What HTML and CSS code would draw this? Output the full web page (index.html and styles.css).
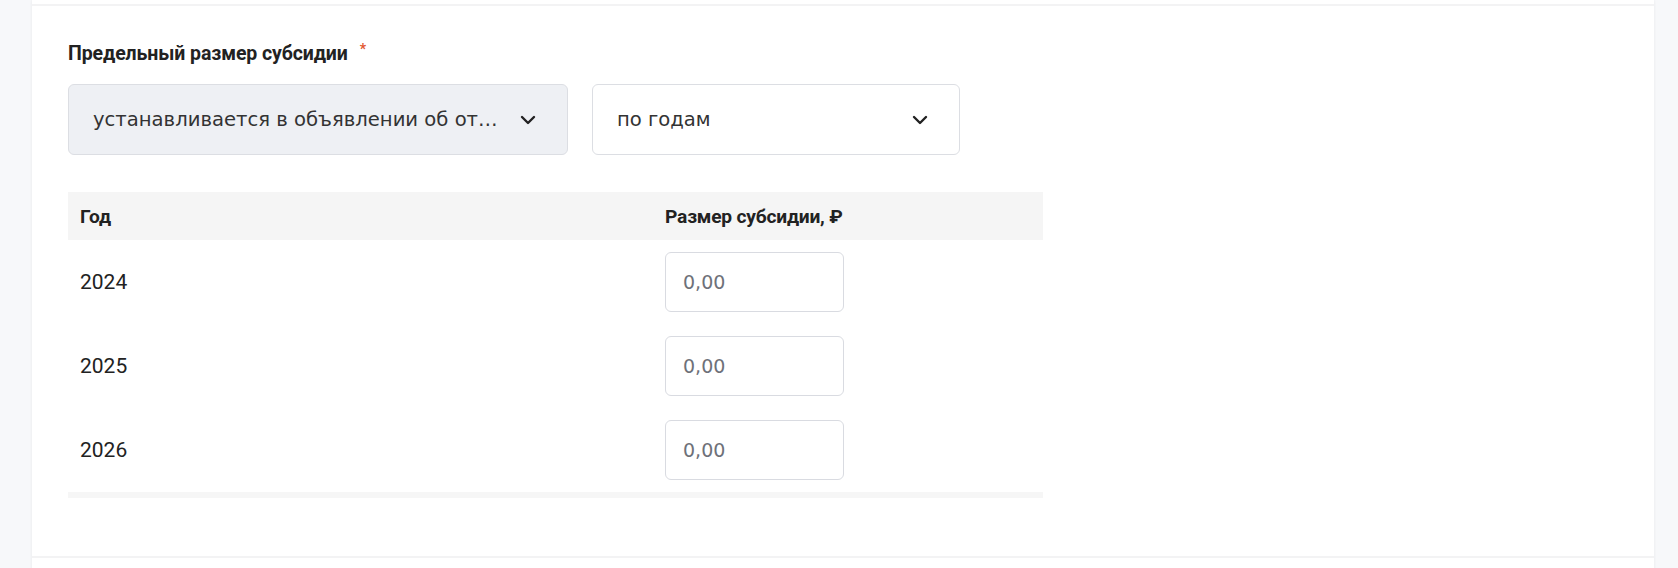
FILE: index.html
```html
<!DOCTYPE html>
<html lang="ru">
<head>
<meta charset="utf-8">
<title>Предельный размер субсидии</title>
<link rel="stylesheet" href="styles.css">
</head>
<body>
<div class="page">
  <div class="card">
    <div class="card-top"></div>
    <div class="card-body">
      <div class="field-label">Предельный размер субсидии<span class="req">*</span></div>
      <div class="selects">
        <div class="select select-disabled">
          <span class="select-text">устанавливается в объявлении об от…</span>
          <svg class="chevron" width="16" height="10" viewBox="0 0 16 10"><path d="M2 2 L8 8 L14 2" fill="none" stroke="#222" stroke-width="2.4" stroke-linecap="round" stroke-linejoin="round"/></svg>
        </div>
        <div class="select select-period">
          <span class="select-text">по годам</span>
          <svg class="chevron" width="16" height="10" viewBox="0 0 16 10"><path d="M2 2 L8 8 L14 2" fill="none" stroke="#222" stroke-width="2.4" stroke-linecap="round" stroke-linejoin="round"/></svg>
        </div>
      </div>
      <div class="table-wrap">
        <table class="years">
          <thead>
            <tr><th class="col-year">Год</th><th>Размер субсидии, ₽</th></tr>
          </thead>
          <tbody>
            <tr><td>2024</td><td><div class="amount">0,00</div></td></tr>
            <tr><td>2025</td><td><div class="amount">0,00</div></td></tr>
            <tr><td>2026</td><td><div class="amount">0,00</div></td></tr>
          </tbody>
        </table>
        <div class="scroll-track"></div>
      </div>
    </div>
    <div class="card-footer"></div>
  </div>
</div>
</body>
</html>
```
FILE: styles.css
```css
html, body {
  margin: 0;
  padding: 0;
  background: #f7f8fa;
  height: 100%;
}

.page {
  padding: 0 24px 0 32px;
  height: 568px;
  overflow: hidden;
}

.card {
  background: #ffffff;
  box-shadow: 0 0 3px rgba(0, 0, 0, 0.07);
  min-height: 568px;
}

.card-top {
  height: 4px;
  border-bottom: 2px solid #f3f3f4;
}

.card-body {
  padding: 31px 36px 58px 36px;
}

.field-label {
  font-family: Roboto, "Liberation Sans", sans-serif;
  font-weight: 700;
  font-size: 19.5px;
  line-height: 24px;
  color: #222222;
  letter-spacing: -0.1px;
}

.req {
  color: #e2572f;
  font-size: 14px;
  font-weight: 700;
  vertical-align: 6px;
  margin-left: 12px;
}

.selects {
  display: flex;
  gap: 24px;
  margin-top: 18px;
}

.select {
  box-sizing: border-box;
  height: 71px;
  border: 1px solid #dcdee3;
  border-radius: 6px;
  display: flex;
  align-items: center;
  justify-content: space-between;
  padding: 0 31px 0 24px;
  font-family: "DejaVu Sans", Verdana, sans-serif;
  font-size: 19.6px;
  color: #333333;
}

.select-disabled {
  width: 500px;
  background: #eef0f4;
}

.select-period {
  width: 368px;
  background: #ffffff;
}

.select-text {
  white-space: nowrap;
}

.chevron {
  flex: none;
  display: block;
}

.table-wrap {
  width: 975px;
  margin-top: 37px;
}

.years {
  width: 100%;
  border-collapse: collapse;
  table-layout: fixed;
  font-family: Roboto, "Liberation Sans", sans-serif;
  color: #222222;
}

.years th {
  box-sizing: border-box;
  background: #f5f5f5;
  height: 48px;
  padding: 0 12px;
  text-align: left;
  font-weight: 700;
  font-size: 19.2px;
  letter-spacing: -0.2px;
}

.years th.col-year {
  width: 60%;
}

.years td {
  padding: 12px;
  font-size: 21px;
  vertical-align: middle;
}

.amount {
  box-sizing: border-box;
  width: 179px;
  height: 60px;
  border: 1px solid #d9dbe1;
  border-radius: 6px;
  display: flex;
  align-items: center;
  padding-left: 17px;
  font-family: "DejaVu Sans", Verdana, sans-serif;
  font-size: 19px;
  color: #6e7179;
}

.scroll-track {
  height: 6px;
  background: #f6f6f6;
}

.card-footer {
  border-top: 2px solid #f3f3f4;
  height: 20px;
}
```
